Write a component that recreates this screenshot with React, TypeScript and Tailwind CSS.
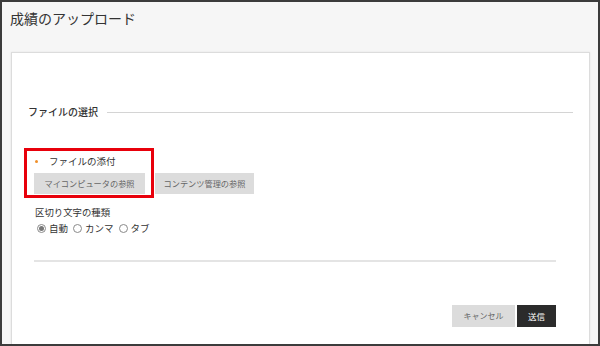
import React from 'react';

const font = { fontFamily: '"Noto Sans CJK JP", "Noto Sans", sans-serif' };

function Radio({ label, checked }: { label: string; checked?: boolean }) {
  return (
    <label className="flex items-center gap-[3px]">
      <span className="flex h-[9px] w-[9px] items-center justify-center rounded-full border border-[#8a8a8a] bg-white">
        {checked && <span className="h-[5px] w-[5px] rounded-full bg-[#777]" />}
      </span>
      <span className="text-[9.5px] leading-4 text-[#333]">{label}</span>
    </label>
  );
}

export default function App() {
  return (
    <div
      className="flex h-[346px] w-[600px] flex-col overflow-hidden border-2 border-[#3c3c3c] bg-[#f6f6f6]"
      style={font}
    >
      {/* Page title */}
      <div className="h-[50px] shrink-0 pl-[8px] pt-[6px] text-[14px] leading-5 text-[#333]">
        成績のアップロード
      </div>

      {/* White panel */}
      <div className="ml-[9px] mr-[8px] flex-1 border border-b-0 border-[#dcdcdc] bg-white px-[16px] pt-[51px] shadow-[0_0_2px_rgba(0,0,0,0.08)]">
        {/* Section heading */}
        <div className="flex items-center gap-[9px]">
          <span className="whitespace-nowrap text-[10px] font-medium leading-4 text-[#333]">
            ファイルの選択
          </span>
          <span className="h-px flex-1 bg-[#d4d4d4]" />
        </div>

        <div className="pl-[6px] pr-[17px]">
          {/* Attach field, highlighted */}
          <div className="relative mt-[33px]">
            <div className="flex items-center gap-[11px] pl-[1px]">
              <span className="h-[3px] w-[3px] rounded-full bg-[#f0902a]" />
              <span className="text-[9.5px] leading-4 text-[#333]">ファイルの添付</span>
            </div>
            <div className="mt-[4px] flex gap-[10px]">
              <button className="h-[21px] w-[111px] bg-[#dcdcdc] text-[8.2px] text-[#666]">
                マイコンピュータの参照
              </button>
              <button className="h-[21px] w-[99px] bg-[#dcdcdc] text-[8.2px] text-[#666]">
                コンテンツ管理の参照
              </button>
            </div>
            <div className="pointer-events-none absolute left-[-10px] top-[-5px] h-[50px] w-[130px] border-[3px] border-[#e8000b]" />
          </div>

          {/* Delimiter */}
          <div className="mt-[10px] pl-[1px] text-[9.4px] leading-4 text-[#333]">区切り文字の種類</div>
          <div className="flex items-center gap-[5px] pl-[3px]">
            <Radio label="自動" checked />
            <Radio label="カンマ" />
            <Radio label="タブ" />
          </div>

          <div className="mt-[24px] h-[2px] bg-[#e4e4e4]" />

          {/* Actions */}
          <div className="mt-[43px] flex justify-end gap-[2px]">
            <button className="h-[22px] w-[63px] bg-[#dcdcdc] text-[8px] text-[#666]">キャンセル</button>
            <button className="h-[22px] w-[39px] bg-[#2b2b2b] text-[8.5px] text-white">送信</button>
          </div>
        </div>
      </div>
    </div>
  );
}
